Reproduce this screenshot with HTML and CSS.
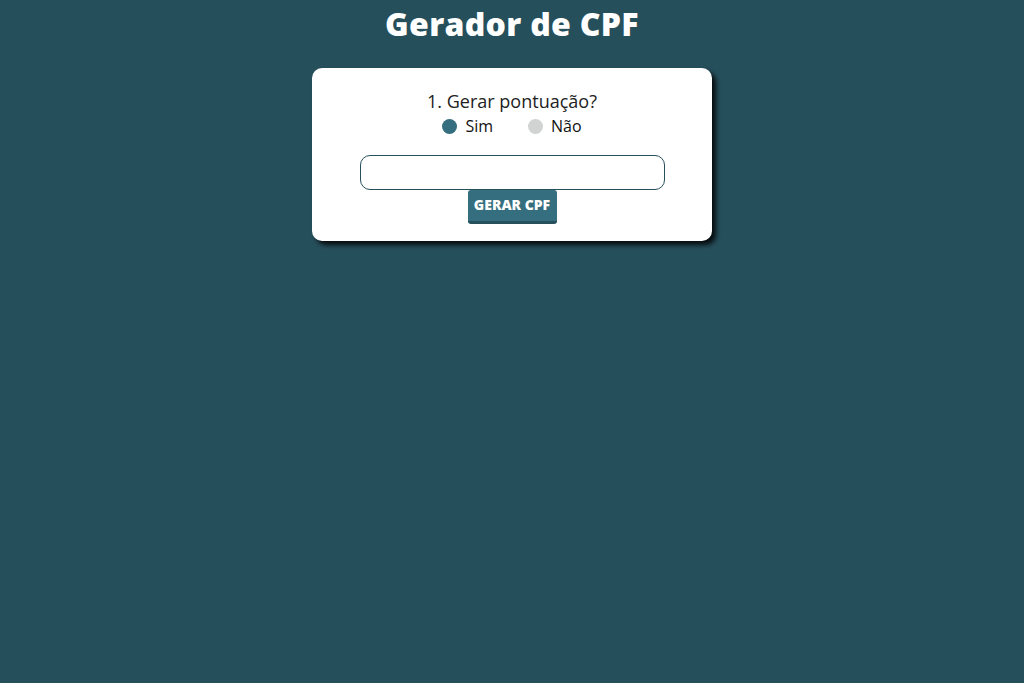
FILE: index.html
```html
<!DOCTYPE html>
<html lang="pt-BR">
<head>
<meta charset="utf-8">
<title>Gerador de CPF</title>
<link rel="stylesheet" href="styles.css">
</head>
<body>
<h1 class="title">Gerador de CPF</h1>
<main class="card">
  <p class="question">1. Gerar pontuação?</p>
  <div class="options">
    <label class="option"><span class="dot dot-on"></span>Sim</label>
    <label class="option"><span class="dot"></span>Não</label>
  </div>
  <input class="field" type="text">
  <button class="btn">GERAR CPF</button>
</main>
</body>
</html>
```
FILE: styles.css
```css
html, body {
  margin: 0;
  padding: 0;
}
body {
  background: #264f5c;
  font-family: "Open Sans", "Liberation Sans", sans-serif;
  display: flex;
  flex-direction: column;
  align-items: center;
  min-height: 683px;
}
.title {
  margin: 4px 0 0;
  height: 44px;
  line-height: 40px;
  font-size: 32px;
  font-weight: 800;
  color: #ffffff;
  letter-spacing: 0.3px;
}
.card {
  margin-top: 20px;
  width: 400px;
  box-sizing: border-box;
  background: #ffffff;
  border-radius: 10px;
  box-shadow: 4px 4px 5px rgba(0,0,0,0.85);
  padding: 20px 0 17px;
  display: flex;
  flex-direction: column;
  align-items: center;
}
.question {
  margin: 0;
  font-size: 18px;
  line-height: 26px;
  color: #222222;
}
.options {
  display: flex;
  gap: 35px;
  margin-top: 0;
  height: 24px;
  align-items: center;
}
.option {
  display: flex;
  align-items: center;
  gap: 8px;
  font-size: 16px;
  color: #111111;
}
.dot {
  width: 15px;
  height: 15px;
  border-radius: 50%;
  background: #d1d3d2;
}
.dot-on {
  background: #356e7e;
}
.field {
  margin-top: 17px;
  width: 305px;
  height: 35px;
  box-sizing: border-box;
  border: 1px solid #264f5c;
  border-radius: 10px;
  padding: 0 10px;
  font-size: 16px;
  outline: none;
}
.btn {
  width: 89px;
  height: 34px;
  box-sizing: border-box;
  background: #356e7e;
  color: #ffffff;
  border: none;
  border-bottom: 3px solid #25505c;
  border-radius: 3px;
  font-family: "Open Sans", "Liberation Sans", sans-serif;
  font-weight: 800;
  font-size: 14px;
  padding: 0 0 2px;
  cursor: pointer;
}
```
